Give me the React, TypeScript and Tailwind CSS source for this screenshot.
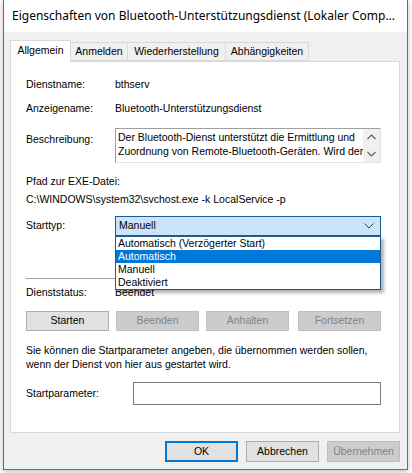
import React from 'react';

const font = { fontFamily: '"Liberation Sans", Arial, sans-serif' };
const titleFont = { fontFamily: '"Noto Sans", "Open Sans", sans-serif' };

function Tab({ label, active, w }: { label: string; active?: boolean; w: string }) {
  if (active) {
    return (
      <div className={`relative z-10 -mb-px flex h-[22px] items-center justify-center border border-b-0 border-[#d9d9d9] bg-white pb-[2px] ${w}`}>
        {label}
      </div>
    );
  }
  return (
    <div className={`mt-[2px] -ml-px flex h-[19px] items-center justify-center border border-[#d9d9d9] bg-[#f0f0f0] ${w}`}>
      {label}
    </div>
  );
}

function Row({ label, value, top }: { label: string; value: string; top: string }) {
  return (
    <div className={`flex h-4 items-center ${top}`}>
      <div className="w-[89px] shrink-0">{label}</div>
      <div>{value}</div>
    </div>
  );
}

export default function App() {
  const options = ['Automatisch (Verzögerter Start)', 'Automatisch', 'Manuell', 'Deaktiviert'];

  return (
    <div className="h-[473px] w-[412px] overflow-hidden bg-white text-[10.5px] text-black" style={font}>
      <div className="ml-[3px] flex h-[470px] w-[405px] flex-col border-x border-b border-[#2b78cf] shadow-[0_2px_6px_rgba(0,0,0,0.25)]">
        {/* title bar */}
        <div className="flex h-[32px] shrink-0 items-center justify-between bg-white pl-[8px] pr-[10px] text-[12px]" style={titleFont}>
          <span className="whitespace-nowrap">Eigenschaften von Bluetooth-Unterstützungsdienst (Lokaler Comp...</span>
          <svg width="11" height="11" viewBox="0 0 11 11" className="mr-[3px]">
            <path d="M0.5 0.5 L10.5 10.5 M10.5 0.5 L0.5 10.5" stroke="#000" strokeWidth="1" />
          </svg>
        </div>

        <div className="flex flex-1 flex-col bg-[#f0f0f0] pl-[6px] pr-[7px] pt-[8px]">
          {/* tabs */}
          <div className="flex">
            <Tab label="Allgemein" active w="w-[61px]" />
            <Tab label="Anmelden" w="w-[58px]" />
            <Tab label="Wiederherstellung" w="w-[99px]" />
            <Tab label="Abhängigkeiten" w="w-[84px]" />
          </div>

          {/* panel */}
          <div className="relative h-[372px] border border-[#d9d9d9] bg-white pl-[15px] pr-[18px] pt-[15px]">
            <Row label="Dienstname:" value="bthserv" top="" />
            <Row label="Anzeigename:" value="Bluetooth-Unterstützungsdienst" top="mt-[8px]" />

            <div className="mt-[11px] flex">
              <div className="w-[89px] shrink-0 pt-[4px]">Beschreibung:</div>
              <div className="flex h-[35px] flex-1 border border-[#a0a0a0] border-r-[#e3e3e3] border-b-[#e3e3e3] bg-white">
                <div className="flex-1 overflow-hidden pl-[2px] pt-px leading-[14px] whitespace-nowrap">
                  <div>Der Bluetooth-Dienst unterstützt die Ermittlung und</div>
                  <div>Zuordnung von Remote-Bluetooth-Geräten. Wird der</div>
                </div>
                <div className="flex w-[17px] flex-col items-center justify-between bg-[#f0f0f0] py-[5px]">
                  <svg width="9" height="6" viewBox="0 0 9 6">
                    <path d="M0.5 5 L4.5 1 L8.5 5" stroke="#606060" fill="none" strokeWidth="1.2" />
                  </svg>
                  <svg width="9" height="6" viewBox="0 0 9 6">
                    <path d="M0.5 1 L4.5 5 L8.5 1" stroke="#606060" fill="none" strokeWidth="1.2" />
                  </svg>
                </div>
              </div>
            </div>

            <div className="mt-[10px] h-4 leading-4">Pfad zur EXE-Datei:</div>
            <div className="mt-[2px] h-4 leading-4">C:\WINDOWS\system32\svchost.exe -k LocalService -p</div>

            <div className="mt-[9px] flex h-[20px] items-center">
              <div className="w-[89px] shrink-0">Starttyp:</div>
              <div className="relative flex h-[20px] flex-1 items-center justify-between border border-[#1f5a96] bg-[#cce4f7] pl-[3px] pr-[6px]">
                <span>Manuell</span>
                <svg width="10" height="6" viewBox="0 0 10 6">
                  <path d="M0.5 0.5 L5 5 L9.5 0.5" stroke="#404040" fill="none" strokeWidth="1" />
                </svg>
                <div className="absolute left-[-1px] right-[-1px] top-[19px] z-20 border border-[#1f5a96] bg-white shadow-[3px_3px_3px_rgba(0,0,0,0.3)]">
                  {options.map((o) => (
                    <div
                      key={o}
                      className={`h-[13px] pl-[2px] leading-[13px] ${o === 'Automatisch' ? 'bg-[#0078d7] text-white' : ''}`}
                    >
                      {o}
                    </div>
                  ))}
                </div>
              </div>
            </div>

            <div className="mt-[42px] h-px bg-[#a0a0a0]" />

            <Row label="Dienststatus:" value="Beendet" top="mt-[6px]" />

            <div className="mt-[10px] flex h-[20px]">
              <div className="flex w-[83px] items-center justify-center border border-[#adadad] bg-[#e1e1e1]">Starten</div>
              <div className="ml-[7px] flex w-[83px] items-center justify-center border border-[#bfbfbf] bg-[#cccccc] text-[#838383]">Beenden</div>
              <div className="ml-[7px] flex w-[83px] items-center justify-center border border-[#bfbfbf] bg-[#cccccc] text-[#838383]">Anhalten</div>
              <div className="ml-auto flex w-[83px] items-center justify-center border border-[#bfbfbf] bg-[#cccccc] text-[#838383]">Fortsetzen</div>
            </div>

            <div className="mt-[12px] leading-[14px]">
              <div className="whitespace-nowrap">Sie können die Startparameter angeben, die übernommen werden sollen,</div>
              <div>wenn der Dienst von hier aus gestartet wird.</div>
            </div>

            <div className="mt-[11px] flex h-[23px] items-center">
              <div className="w-[107px] shrink-0">Startparameter:</div>
              <div className="h-[23px] flex-1 border border-[#7a7a7a] bg-white" />
            </div>
          </div>

          {/* bottom buttons */}
          <div className="mt-[8px] flex justify-end gap-[8px]">
            <div className="flex h-[21px] w-[73px] items-center justify-center border-2 border-[#0078d7] bg-[#e1e1e1]">OK</div>
            <div className="flex h-[21px] w-[73px] items-center justify-center border border-[#adadad] bg-[#e1e1e1]">Abbrechen</div>
            <div className="flex h-[21px] w-[73px] items-center justify-center border border-[#bfbfbf] bg-[#cccccc] text-[#838383]">Übernehmen</div>
          </div>
        </div>
      </div>
    </div>
  );
}
